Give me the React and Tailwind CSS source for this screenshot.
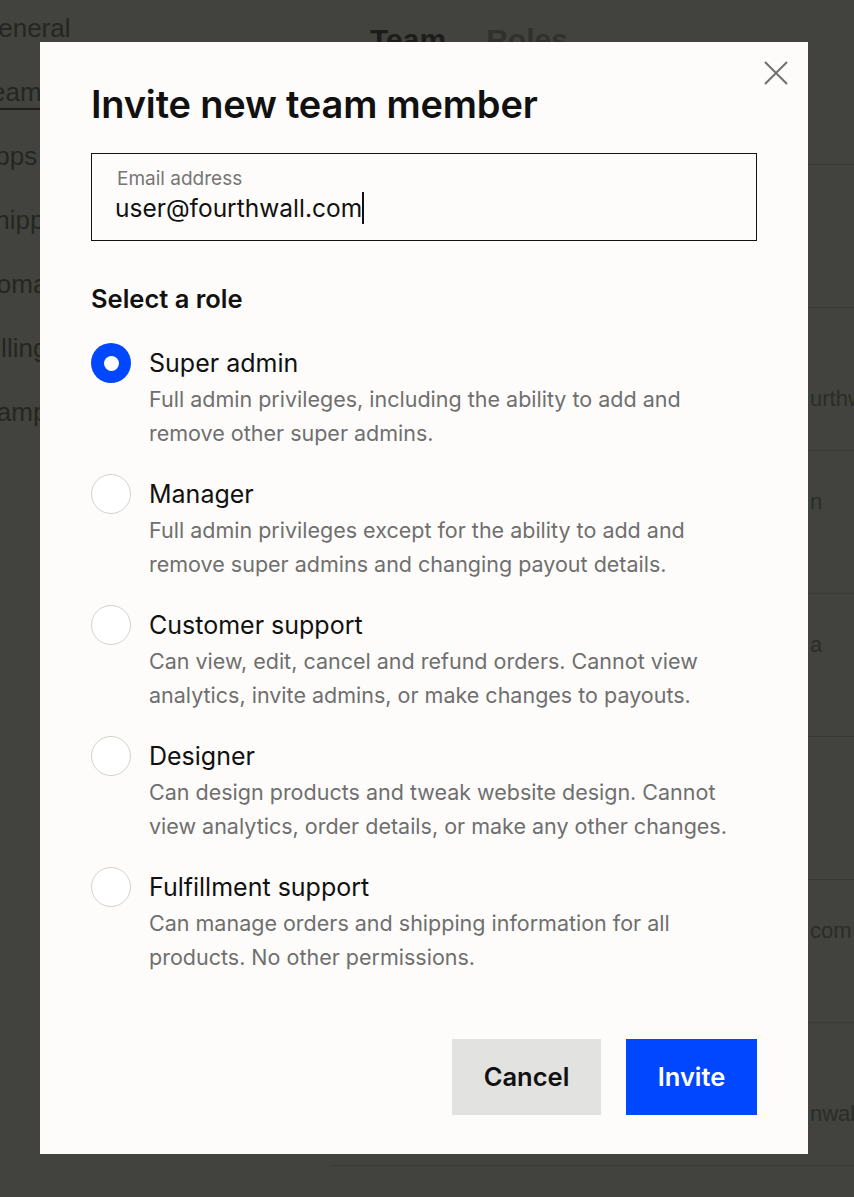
import React, { useState } from "react";

const roles = [
  {
    id: "super",
    name: "Super admin",
    desc: ["Full admin privileges, including the ability to add and", "remove other super admins."],
  },
  {
    id: "manager",
    name: "Manager",
    desc: ["Full admin privileges except for the ability to add and", "remove super admins and changing payout details."],
  },
  {
    id: "support",
    name: "Customer support",
    desc: ["Can view, edit, cancel and refund orders. Cannot view", "analytics, invite admins, or make changes to payouts."],
  },
  {
    id: "designer",
    name: "Designer",
    desc: ["Can design products and tweak website design. Cannot", "view analytics, order details, or make any other changes."],
  },
  {
    id: "fulfillment",
    name: "Fulfillment support",
    desc: ["Can manage orders and shipping information for all", "products. No other permissions."],
  },
];

const sideItems = ["General", "Team", "Apps", "Shipping", "Domains", "Billing", "Campaigns"];

const rows = [
  { name: "", email: "" },
  { name: "", email: "urthwall.com" },
  { name: "n", email: "" },
  { name: "a", email: "" },
  { name: "", email: "" },
  { name: "com", email: "" },
  { name: "", email: "nwall.com" },
];

const Radio = ({ checked }) => {
  if (checked) {
    return (
      <span className="shrink-0 w-10 h-10 -mt-1 rounded-full bg-[#0047ff] flex items-center justify-center">
        <span className="w-[15px] h-[15px] rounded-full bg-white" />
      </span>
    );
  }
  return <span className="shrink-0 w-10 h-10 -mt-1 rounded-full border border-[#d2d2cf] bg-white" />;
};

const App = () => {
  const [role, setRole] = useState("super");
  const [email, setEmail] = useState("user@fourthwall.com");

  return (
    <div className="relative w-[854px] h-[1197px] overflow-hidden bg-[#42433e] flex font-['Liberation_Sans',sans-serif]">
      {/* dimmed page behind the modal */}
      <div className="w-[352px] -ml-[22px] shrink-0 flex flex-col gap-[36px] pt-[14px] text-[26px] leading-[28px] text-[#252622]">
        {sideItems.map((s) => (
          <div key={s} className={s === "Team" ? "w-fit h-[28px] relative" : "w-fit h-[28px]"}>
            {s}
            {s === "Team" && <div className="absolute left-0 right-0 top-[30px] h-[2px] bg-[#1e1f1b]" />}
          </div>
        ))}
      </div>
      <div className="flex-1 flex flex-col">
        <div className="flex gap-[40px] pl-[40px] pt-[23px] h-[164px] text-[30px] leading-[34px] font-bold">
          <span className="text-[#1c1d1a]">Team</span>
          <span className="text-[#30312d]">Roles</span>
        </div>
        <div className="flex flex-col border-t border-[#393a35]">
          {rows.map((r, i) => (
            <div
              key={i}
              className="h-[143px] border-b border-[#393a35] pl-[480px] pt-[37px] flex flex-col gap-[12px] text-[22px] leading-[28px] text-[#2b2c28] whitespace-nowrap"
            >
              <div className="h-[28px]">{r.name}</div>
              <div className="h-[28px]">{r.email}</div>
            </div>
          ))}
        </div>
      </div>

      {/* modal */}
      <div className="absolute top-[42px] left-[40px] w-[768px] bg-[#fdfcfa] pt-[40px] px-[51px] pb-[39px] font-['Inter',sans-serif]">
        <button className="absolute top-[19px] right-[20px] w-6 h-6 text-[#707070]" aria-label="Close">
          <svg viewBox="0 0 24 24" className="w-6 h-6" fill="none" stroke="currentColor" strokeWidth="2">
            <path d="M1 1L23 23M23 1L1 23" />
          </svg>
        </button>
        <h1 className="text-[38px] leading-[44px] font-semibold tracking-[-0.005em] text-[#111]">
          Invite new team member
        </h1>

        <div className="mt-[27px] h-[88px] border-[1.5px] border-[#111] pl-[25px] pt-[14px]">
          <div className="text-[19px] leading-[22px] text-[#767676]">Email address</div>
          <div className="mt-[3px] flex items-center h-[30px]">
            <span className="text-[24.5px] leading-[30px] text-[#111] -ml-[2px]">{email}</span>
            <span className="w-[2px] h-[32px] bg-[#111]" />
          </div>
        </div>

        <h2 className="mt-[42px] text-[25.5px] leading-[32px] font-semibold text-[#111]">Select a role</h2>

        <div className="mt-[32px] flex flex-col gap-[28px]">
          {roles.map((r) => (
            <label key={r.id} className="flex gap-[18px] cursor-pointer" onClick={() => setRole(r.id)}>
              <Radio checked={role === r.id} />
              <div>
                <div className="text-[25px] leading-[32px] text-[#111]">{r.name}</div>
                <div className="mt-[3px] text-[21.5px] leading-[34px] text-[#6f6f6f]">
                  {r.desc.map((d) => (
                    <div key={d}>{d}</div>
                  ))}
                </div>
              </div>
            </label>
          ))}
        </div>

        <div className="mt-[65px] flex justify-end gap-[25px]">
          <button className="w-[149px] h-[76px] bg-[#e2e2e0] text-[25.5px] font-semibold text-[#111]">Cancel</button>
          <button
            className="w-[131px] h-[76px] bg-[#0047ff] text-[25.5px] font-semibold text-white"
            onClick={() => setEmail(email)}
          >
            Invite
          </button>
        </div>
      </div>
    </div>
  );
};

export default App;
